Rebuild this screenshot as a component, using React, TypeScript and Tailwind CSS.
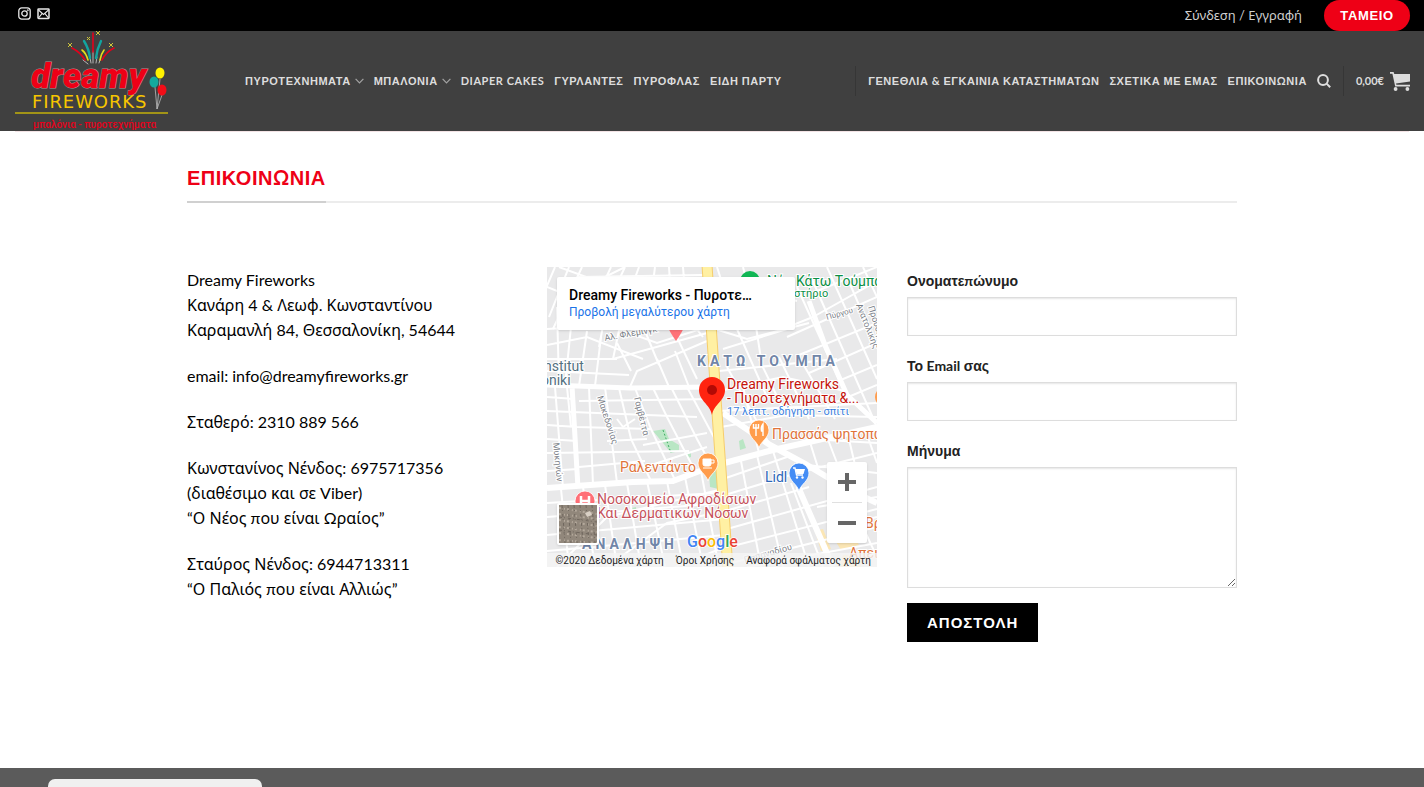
import type { ReactNode } from "react";

const NAV_LEFT = [
  { label: "ΠΥΡΟΤΕΧΝΗΜΑΤΑ", menu: true },
  { label: "ΜΠΑΛΟΝΙΑ", menu: true },
  { label: "DIAPER CAKES", menu: false },
  { label: "ΓΥΡΛΑΝΤΕΣ", menu: false },
  { label: "ΠΥΡΟΦΛΑΣ", menu: false },
  { label: "ΕΙΔΗ ΠΑΡΤΥ", menu: false },
];

const NAV_RIGHT = ["ΓΕΝΕΘΛΙΑ & ΕΓΚΑΙΝΙΑ ΚΑΤΑΣΤΗΜΑΤΩΝ", "ΣΧΕΤΙΚΑ ΜΕ ΕΜΑΣ", "ΕΠΙΚΟΙΝΩΝΙΑ"];

// Lato sets the latin text, greek runs get their own face
const Greek = ({ text, bold }: { text: string; bold?: boolean }) => (
  <span>
    {text.split(/([Ά-ΨΪ-ορ-ώ]+)/).map((part, i) =>
      i % 2 === 1 ? (
        <span key={i} className={bold ? "font-['Liberation_Sans',sans-serif] leading-none" : "font-['Noto_Sans',sans-serif] leading-none"}>
          {part}
        </span>
      ) : (
        part
      )
    )}
  </span>
);

const Logo = () => (
  <svg width="153" height="100" viewBox="0 0 153 100" className="tracking-normal" role="img" aria-label="Dreamy Fireworks">
    <g fill="none" strokeLinecap="round">
      <path d="M68 29 L73 33 M75 27 L76 32 M78 20 V32 M82 26 L81 32 M85 29 L84 32" stroke="#b5b5b5" strokeWidth="1" />
      <path d="M57 17 Q65 21 70 29" stroke="#e4001b" strokeWidth="1.6" />
      <path d="M67 19 Q71 22 73 29" stroke="#e6df1a" strokeWidth="1.6" />
      <path d="M69 10 Q74 18 75 27" stroke="#12a5a0" strokeWidth="2.4" />
      <path d="M78 2 V21" stroke="#e4001b" strokeWidth="1.6" />
      <path d="M86 10 Q82 18 81 27" stroke="#12a5a0" strokeWidth="2.4" />
      <path d="M89 19 Q86 23 85 29" stroke="#e6df1a" strokeWidth="1.6" />
      <path d="M99 17 Q91 21 87 29" stroke="#e4001b" strokeWidth="1.6" />
    </g>
    <path d="M53 12l4 4m0-4l-4 4M72 6l3 3m0-3l-3 3M81 0l4 4m0-4l-4 4M94 12l4 4m0-4l-4 4" stroke="#cfc53a" />
    <text x="16" y="57" fontSize="35" fontWeight="900" fontStyle="italic" fill="#ee0016" stroke="#b98f92" strokeWidth="1" paintOrder="stroke" className="font-['Roboto',sans-serif]">
      dreamy
    </text>
    <text x="17" y="77" fontSize="18" fontWeight="400" fill="#f7c600" className="font-['DejaVu_Sans',sans-serif] tracking-wider">
      FIREWORKS
    </text>
    <path d="M0 82 H153" stroke="#a29417" strokeWidth="2" />
    <text x="18" y="97" fontSize="10" fontWeight="500" fill="#e4001b" className="font-['Roboto',sans-serif]">
      μπαλόνια - πυροτεχνήματα
    </text>
    <path d="M145 48 L142 78 M140 56 L142 78 M147 64 L142 78" stroke="#bbb" strokeWidth="0.8" fill="none" />
    <ellipse cx="145" cy="42" rx="4.5" ry="5.5" fill="#fff200" />
    <ellipse cx="139" cy="51" rx="4.5" ry="5.5" fill="#13a99d" />
    <ellipse cx="147" cy="59" rx="4.5" ry="5.5" fill="#f20d17" />
  </svg>
);

const Chevron = () => (
  <svg width="9" height="6" viewBox="0 0 9 6" fill="none" stroke="#a3a3a3" strokeWidth="1.2" aria-hidden="true">
    <path d="M.6 .8 L4.5 4.9 L8.4 .8" />
  </svg>
);

const TopBar = () => (
  <div className="flex h-[31px] items-center justify-between bg-black pl-[18px] pr-[14px]">
    <div className="flex gap-[6px] pb-1">
      <a href="#instagram" aria-label="Instagram">
        <svg width="13" height="13" viewBox="0 0 13 13" fill="none" stroke="#e8e8e8" strokeWidth="1.3">
          <rect x=".8" y=".8" width="11.4" height="11.4" rx="3" />
          <circle cx="6.5" cy="6.5" r="2.7" />
          <circle cx="9.8" cy="3.2" r=".3" />
        </svg>
      </a>
      <a href="#email" aria-label="Email">
        <svg width="13" height="13" viewBox="0 0 13 13" fill="none" stroke="#e8e8e8" strokeWidth="1.5">
          <rect x="1" y="2" width="11" height="9.4" rx=".6" />
          <path d="M1.5 3 L6.5 7.4 L11.5 3 M1.5 11 L5 6.6 M11.5 11 L8 6.6" strokeWidth="1.1" />
        </svg>
      </a>
    </div>
    <div className="flex items-center gap-[22px]">
      <a href="#account" className="text-[13px] text-[#cfcfcf]">
        <Greek text="Σύνδεση / Εγγραφή" />
      </a>
      <button className="h-[31px] w-[86px] rounded-full bg-[#ee0016] text-[13px] font-bold tracking-wider text-white">
        <Greek text="ΤΑΜΕΙΟ" bold />
      </button>
    </div>
  </div>
);

const Header = () => (
  <header className="flex h-[100px] items-center bg-[#404040] pr-[14px] pl-[15px] text-[11px] font-bold tracking-wider text-[#dddddd]">
    <a href="#home" className="mr-[77px] shrink-0">
      <Logo />
    </a>
    <nav className="flex flex-1 items-center gap-[10px] whitespace-nowrap">
      {NAV_LEFT.map((item) => (
        <a key={item.label} href="#shop" className="flex items-center gap-1">
          <Greek text={item.label} bold />
          {item.menu && <Chevron />}
        </a>
      ))}
    </nav>
    <nav className="flex items-center gap-[10px] whitespace-nowrap">
      <span className="mr-[2px] h-[30px] w-px bg-[#363636]" />
      {NAV_RIGHT.map((label) => (
        <a key={label} href="#page">
          <Greek text={label} bold />
        </a>
      ))}
      <button aria-label="Αναζήτηση">
        <svg width="14" height="14" viewBox="0 0 14 14" fill="none" stroke="#dddddd" strokeWidth="2">
          <circle cx="6" cy="6" r="4.9" />
          <path d="M9.6 9.6 L13.2 13.2" />
        </svg>
      </button>
      <span className="mx-[2px] h-[30px] w-px bg-[#363636]" />
      <a href="#cart" className="flex items-center gap-[6px] tracking-normal">
        0,00€
        <svg width="20" height="19" viewBox="0 0 20 19" fill="#dddddd" aria-hidden="true">
          <path d="M0 0 H3.6 L4.3 2 H20 V9.4 L6 11.4 L6.4 12.8 H20 V14.4 H5.2 L2.4 1.7 H0 Z" />
          <circle cx="5.6" cy="17" r="1.9" />
          <circle cx="17.4" cy="17" r="1.9" />
        </svg>
      </a>
    </nav>
  </header>
);

const Pin = ({ x, y, color, children }: { x: number; y: number; color: string; children?: ReactNode }) => (
  <g transform={`translate(${x} ${y})`}>
    <path d="M0 18 C-2 11 -10 8 -10 0 A10 10 0 0 1 10 0 C10 8 2 11 0 18 Z" fill={color} stroke="#fff" strokeWidth=".8" />
    {children}
  </g>
);

const MapDrawing = () => (
  <svg width="330" height="300" viewBox="0 0 330 300" className="block font-['Roboto',sans-serif]" aria-hidden="true">
    <rect width="330" height="300" fill="#e9e9ea" />
    <g fill="#b9e6c4">
      <path d="M106 164 l12 -2 l4 10 l10 6 v6 l-8 2 l-8 -10z M192 174 l4 -2 l3 9 l-6 2z M162 206 l8 -2 l2 18 l-9 -2z M139 187l5-1v4l-4 1z M85 241l4-1v5l-3 1z" />
    </g>
    <path d="M116 163 L124 186" stroke="#3fae63" strokeDasharray="2 2" />
    <path d="M268 264 l8 -2 l8 20 l-10 2z M286 270 l20 -4 l6 12 l-18 5z M296 288h18v12h-22z" fill="#fbe6b5" />
    <g fill="none" stroke="#fff" strokeWidth="2">
      <path d="M8 0 L-4 28 M22 0 L2 50 M35 0 L6 62 M0 20 L30 32 M12 0 L50 14 L78 0 M50 14 L30 62 M64 0 L50 30 M78 0 L60 38 L52 80" />
      <path d="M92 0 L76 44 L66 92 M108 0 L100 62 M122 0 L126 62 L150 112 M136 0 L140 50 L156 70 M30 10 L158 8 M56 38 L158 34" />
      <path d="M0 62 L60 58 L110 76 L160 60 M0 78 L40 70 L96 92 M10 40 L12 118 M24 60 L18 118 M40 64 L32 119 M54 70 L48 119" />
      <path d="M83 120 L90 104 L160 74 M66 92 L160 66 M70 76 L84 104 M98 64 L112 98 M110 92 L122 120 M128 84 L142 120 M0 92 L70 92 M0 104 L82 108" />
      <path d="M0 130 L28 132 M0 144 L150 150 M0 158 L30 160 L104 162 M0 172 L30 174 M0 186 L142 184 M0 204 L31 202 M8 120 L16 221 M20 120 L24 160" />
      <path d="M42 120 L46 218 M58 120 L70 216 M72 121 L84 172 L104 214 M88 121 L104 162 L128 213 M106 121 L120 150 L148 204 M124 120 L150 172 L164 198 M140 120 L170 176" />
      <path d="M32 134 L168 132 M32 200 L98 194 M70 152 L76 160 L88 152 M96 178 L160 166 M98 200 L160 180 M60 174 L100 172" />
      <path d="M0 236 L170 226 M0 250 L176 236 M0 268 L178 252 M0 284 L178 268 M14 222 L22 300 M36 220 L48 300 M58 218 L70 300 M80 216 L94 300 M100 214 L118 300 M120 214 L136 300 M138 210 L156 300 M154 204 L170 290" />
      <path d="M10 300 L60 250 L176 222 M60 300 L120 256 L178 244 M128 300 L178 280" />
      <path d="M168 20 L190 18 L250 34 M168 40 L236 62 L266 50 M168 62 L200 72 L262 56 M176 82 L240 62 M170 0 L190 62 M196 0 L206 40 L214 92 M222 10 L240 62 M190 62 L220 130" />
      <path d="M172 104 L290 92 M172 124 L236 110 L298 124 M172 144 L330 136 M174 160 L240 148 L330 150 M212 92 L240 150 M232 90 L262 152 M252 90 L288 152 M180 100 L224 180 M196 120 L212 186" />
      <path d="M250 20 L300 130 M264 10 L330 160 M280 0 L330 112 M300 10 L330 80 M316 0 L330 30 M240 70 L330 30 M252 88 L330 56 M262 106 L330 76 M272 122 L330 98 M282 138 L330 118 M266 50 L330 14 M270 24 L330 0" />
      <path d="M176 212 L240 190 M178 228 L250 206 L330 186 M178 244 L262 220 M180 262 L330 220 M182 280 L330 242 M184 296 L330 260 M194 194 L214 300 M210 188 L236 300 M226 184 L262 300" />
      <path d="M236 182 L262 172 L330 176 M262 172 L272 204 M280 170 L300 222 M300 164 L318 240 M318 162 L330 196 M260 198 L330 206 M270 240 L330 230 M282 262 L330 250 M298 222 L330 290 M244 216 L276 300 M200 300 L330 276" />
    </g>
    <g fill="none" stroke="#fff" strokeLinejoin="round">
      <path d="M0 118 L30 119 L83 121 L165 120 M25 119 L31 221" strokeWidth="5" />
      <path d="M0 221 L86 215 L126 214 L150 205 L170 198 L226 183 L330 160" strokeWidth="6" />
      <path d="M262 34 L278 78 L300 128 L330 156" strokeWidth="5" />
      <path d="M176 146 L223 178 L260 198 L300 222 L330 236 M250 196 L252 222 L286 300" strokeWidth="6" />
    </g>
    <path d="M160 -2 L170 146 L181 302" stroke="#f6cd6b" strokeWidth="11" fill="none" />
    <path d="M160 -2 L170 146 L181 302" stroke="#fff0a3" strokeWidth="9" fill="none" />

    <g fontSize="9" fill="#7b8087" stroke="#fff" strokeWidth="2" paintOrder="stroke">
      <text x="58" y="74" transform="rotate(-10 58 74)">Αλ. Φλέμινγκ</text>
      <text transform="translate(280 53) rotate(-16)" fontSize="8">Πύργου</text>
      <text transform="translate(309 38) rotate(68)">Ανατολικής</text>
      <text transform="translate(321 40) rotate(72)">Προύσης</text>
      <text transform="translate(50 130) rotate(72)">Μακεδονίας</text>
      <text transform="translate(87 131) rotate(76)">Γαμβέττα</text>
      <text transform="translate(6 176) rotate(84)">Μυκηνών</text>
      <text transform="translate(198 296) rotate(-16)">Παπαναδίου</text>
    </g>
    <g fontSize="14" stroke="#fff" strokeWidth="2" paintOrder="stroke">
      <text x="-3" y="104" fill="#54717f">nstitut</text>
      <text x="-6" y="118" fill="#54717f">oniki</text>
      <text x="220" y="19" fill="#0b8f45">Νέα Κάτω Τούμπα</text>
      <text x="247" y="30" fill="#0b8f45" fontSize="11">στήριο</text>
      <text x="150" y="99" fontWeight="700" letterSpacing="4" fill="#7186a8">ΚΑΤΩ ΤΟΥΜΠΑ</text>
      <text x="180" y="122" fill="#c5130b">Dreamy Fireworks</text>
      <text x="180" y="136" fill="#c5130b">- Πυροτεχνήματα &amp;...</text>
      <text x="180" y="148" fill="#3b82e0" fontSize="11">17 λεπτ. οδήγηση - σπίτι</text>
      <text x="225" y="172" fill="#e0733a">Πρασσάς ψητοπωλείο</text>
      <text x="73" y="205" fill="#e0733a">Ραλεντάντο</text>
      <text x="218" y="215" fill="#2d66b8">Lidl</text>
      <text x="50" y="237" fill="#c6525c">Νοσοκομείο Αφροδίσιων</text>
      <text x="50" y="251" fill="#c6525c">Και Δερματικών Νόσων</text>
      <text x="35" y="282" fontWeight="700" letterSpacing="4" fill="#7186a8">ΑΝΑΛΗΨΗ</text>
      <text x="318" y="261" fill="#e0733a">Βραζ</text>
      <text x="302" y="291" fill="#e0733a">Απειρ</text>
    </g>

    <circle cx="203" cy="14" r="10" fill="#11b755" />
    <path d="M119 56 H139 Q136 64 129 74 Q122 64 119 56Z" fill="#ff7379" />
    <circle cx="338" cy="130" r="10" fill="#ff9d4e" />
    <Pin x={38} y={234} color="#ff6f77">
      <path d="M-4 -5 V5 M4 -5 V5 M-4 0 H4" stroke="#fff" strokeWidth="2.5" />
    </Pin>
    <Pin x={212} y={163} color="#ff9c4b">
      <path d="M-3 -6 V6 M-5.5 -6 V-2 H-.5 V-6 M4 6 V-6 Q1.5 -3 2.5 1 H4" stroke="#fff" strokeWidth="1.4" fill="none" />
    </Pin>
    <Pin x={161} y={196} color="#ff9c4b">
      <path d="M-5 -4 H3 V1 Q3 3 1 3 H-3 Q-5 3 -5 1Z M-5 5 H4" fill="#fff" stroke="#fff" />
      <path d="M3 -3 H6 V0 H3" fill="none" stroke="#fff" />
    </Pin>
    <Pin x={252} y={206} color="#458df5">
      <path d="M-6 -5 H-4 L-2.5 2 H4" fill="none" stroke="#fff" strokeWidth="1.3" />
      <path d="M-3.5 -4 H6 L4.5 1 H-2.5Z" fill="#fff" />
      <circle cx="-2" cy="4.5" r="1.2" fill="#fff" />
      <circle cx="3.5" cy="4.5" r="1.2" fill="#fff" />
    </Pin>
    <path d="M165 148 C163 137 152 134 152 123 A13 13 0 0 1 178 123 C178 134 167 137 165 148Z" fill="#ff2410" />
    <circle cx="165" cy="123" r="5" fill="#b30a05" />
    <text x="140" y="280" fontSize="16" fontWeight="500" stroke="#fff" strokeWidth="1.5" paintOrder="stroke">
      <tspan fill="#4285f4">G</tspan><tspan fill="#ea4335">o</tspan><tspan fill="#fbbc05">o</tspan><tspan fill="#4285f4">g</tspan><tspan fill="#34a853">l</tspan><tspan fill="#ea4335">e</tspan>
    </text>
  </svg>
);

const MapCard = () => (
  <div className="relative h-[300px] overflow-hidden bg-[#e9e9ea] font-['Roboto',sans-serif]">
    <MapDrawing />
    <div className="absolute left-[10px] top-[10px] w-[238px] rounded-xs bg-white px-3 py-[10px] shadow">
      <p className="text-[14px] leading-[17px] font-medium text-black">Dreamy Fireworks - Πυροτε…</p>
      <a href="#map" className="block text-[12px] leading-4 text-[#1a73e8]">Προβολή μεγαλύτερου χάρτη</a>
    </div>
    <button aria-label="Δορυφόρος" className="absolute bottom-[22px] left-[10px] size-[42px] rounded-xs border-2 border-white bg-[#91877b] shadow">
      <svg width="38" height="38" viewBox="0 0 38 38" aria-hidden="true">
        <g stroke="#b5aa9d" strokeWidth="2" strokeDasharray="2 3 1 2">
          <path d="M0 3 L38 9 M0 9 L38 14 M0 15 L38 21 M0 22 L38 27 M0 28 L38 33 M0 35 L38 38" />
        </g>
        <g stroke="#70675e" strokeDasharray="3 2 1 3">
          <path d="M3 0 L6 38 M9 0 L12 38 M15 0 L18 38 M21 0 L24 38 M27 0 L30 38 M33 0 L36 38 M0 12 L38 17 M0 25 L38 30" />
        </g>
        <path d="M26 8 l5 -2 l2 4 l-5 2z" fill="#d9d0c5" />
      </svg>
    </button>
    <div className="absolute bottom-6 right-[10px] flex w-10 flex-col items-center rounded-xs bg-white shadow">
      <button aria-label="Μεγέθυνση" className="flex h-10 w-10 items-center justify-center">
        <svg width="18" height="18" viewBox="0 0 18 18" stroke="#666" strokeWidth="4">
          <path d="M9 0 V18 M0 9 H18" />
        </svg>
      </button>
      <span className="h-px w-[30px] bg-[#e0e0e0]" />
      <button aria-label="Σμίκρυνση" className="flex h-10 w-10 items-center justify-center">
        <svg width="18" height="18" viewBox="0 0 18 18" stroke="#666" strokeWidth="4">
          <path d="M0 9 H18" />
        </svg>
      </button>
    </div>
    <div className="absolute inset-x-0 bottom-0 flex h-[14px] items-center justify-end gap-3 bg-[#f5f5f5]/80 px-[6px] text-[10px] whitespace-nowrap text-[#222]">
      <span>©2020 Δεδομένα χάρτη</span>
      <a href="#terms">Όροι Χρήσης</a>
      <a href="#report">Αναφορά σφάλματος χάρτη</a>
    </div>
  </div>
);

const CONTACT = [
  ["Dreamy Fireworks", "Κανάρη 4 & Λεωφ. Κωνσταντίνου", "Καραμανλή 84, Θεσσαλονίκη, 54644"],
  ["email: info@dreamyfireworks.gr"],
  ["Σταθερό: 2310 889 566"],
  ["Κωνστανίνος Νένδος: 6975717356", "(διαθέσιμο και σε Viber)", "“Ο Νέος που είναι Ωραίος”"],
  ["Σταύρος Νένδος: 6944713311", "“Ο Παλιός που είναι Αλλιώς”"],
];

const ContactInfo = () => (
  <div className="space-y-[21px] text-[16px] leading-[25px] text-black">
    {CONTACT.map((lines) => (
      <p key={lines[0]}>
        {lines.map((line, i) => (
          <span key={line}>
            {i > 0 && <br />}
            <Greek text={line} />
          </span>
        ))}
      </p>
    ))}
  </div>
);

const inputStyle = "block w-full border border-[#dddddd] bg-white px-3 text-[16px] shadow-[inset_0_1px_2px_rgba(0,0,0,0.1)]";

const ContactForm = () => (
  <form className="text-[14px] font-bold text-[#222222]">
    <label htmlFor="name" className="block h-[30px] leading-7">
      <Greek text="Ονοματεπώνυμο" bold />
    </label>
    <input id="name" type="text" className={`${inputStyle} mb-4 h-[39px]`} />
    <label htmlFor="email" className="block h-[30px] leading-7">
      <Greek text="Το Email σας" bold />
    </label>
    <input id="email" type="email" className={`${inputStyle} mb-4 h-[39px]`} />
    <label htmlFor="message" className="block h-[30px] leading-7">
      <Greek text="Μήνυμα" bold />
    </label>
    <textarea id="message" className={`${inputStyle} h-[121px] resize`} />
    <button type="button" className="mt-[15px] h-[39px] bg-black px-5 text-[15px] font-bold tracking-[1px] text-white">
      <Greek text="ΑΠΟΣΤΟΛΗ" bold />
    </button>
  </form>
);

export default function App() {
  return (
    <div className="flex min-h-screen flex-col overflow-x-hidden bg-white font-['Lato','Noto_Sans',sans-serif]">
      <TopBar />
      <Header />
      <div className="mx-[15px] h-px bg-[#f3e3e5]" />
      <main className="mx-auto w-full max-w-[1080px] flex-1 px-[15px] pt-[25px]">
        <div className="flex border-b-2 border-[#ececec]">
          <h1 className="-mb-[2px] border-b-2 border-[#d0d0d0] pt-[3px] pb-[7px] text-[20px] leading-[34px] font-bold tracking-wide text-[#ee0016]">
            <Greek text="ΕΠΙΚΟΙΝΩΝΙΑ" bold />
          </h1>
        </div>
        <div className="grid grid-cols-3 gap-[30px] pt-16 pb-[126px]">
          <ContactInfo />
          <MapCard />
          <ContactForm />
        </div>
      </main>
      <footer className="h-[19px] bg-[#5b5b5b] pt-[11px] pl-12">
        <div className="h-2 w-[214px] rounded-t-[7px] bg-[#f0f0f0]" />
      </footer>
    </div>
  );
}
